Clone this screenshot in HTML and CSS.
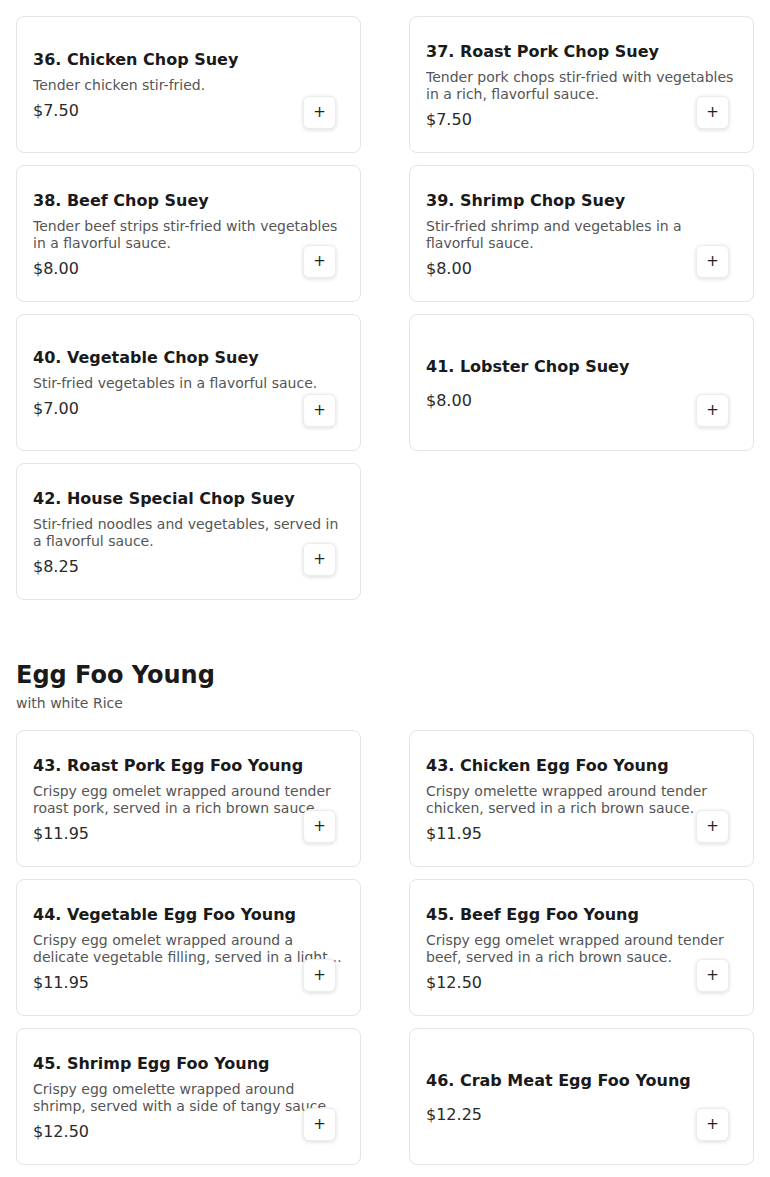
FILE: index.html
```html
<!DOCTYPE html>
<html lang="en">
<head>
<meta charset="utf-8">
<title>Menu</title>
<link rel="stylesheet" href="styles.css">
</head>
<body>
<main class="menu">
  <section class="section section-first">
    <div class="grid">
      <article class="card">
        <div class="info">
          <h3 class="name">36. Chicken Chop Suey</h3>
          <p class="desc">Tender chicken stir-fried.</p>
          <div class="price">$7.50</div>
        </div>
        <button class="add" aria-label="Add">+</button>
      </article>
      <article class="card">
        <div class="info">
          <h3 class="name">37. Roast Pork Chop Suey</h3>
          <p class="desc">Tender pork chops stir-fried with vegetables in a rich, flavorful sauce.</p>
          <div class="price">$7.50</div>
        </div>
        <button class="add" aria-label="Add">+</button>
      </article>
      <article class="card">
        <div class="info">
          <h3 class="name">38. Beef Chop Suey</h3>
          <p class="desc">Tender beef strips stir-fried with vegetables in a flavorful sauce.</p>
          <div class="price">$8.00</div>
        </div>
        <button class="add" aria-label="Add">+</button>
      </article>
      <article class="card">
        <div class="info">
          <h3 class="name">39. Shrimp Chop Suey</h3>
          <p class="desc">Stir-fried shrimp and vegetables in a flavorful sauce.</p>
          <div class="price">$8.00</div>
        </div>
        <button class="add" aria-label="Add">+</button>
      </article>
      <article class="card">
        <div class="info">
          <h3 class="name">40. Vegetable Chop Suey</h3>
          <p class="desc">Stir-fried vegetables in a flavorful sauce.</p>
          <div class="price">$7.00</div>
        </div>
        <button class="add" aria-label="Add">+</button>
      </article>
      <article class="card">
        <div class="info">
          <h3 class="name">41. Lobster Chop Suey</h3>
          <p class="desc"></p>
          <div class="price">$8.00</div>
        </div>
        <button class="add" aria-label="Add">+</button>
      </article>
      <article class="card">
        <div class="info">
          <h3 class="name">42. House Special Chop Suey</h3>
          <p class="desc">Stir-fried noodles and vegetables, served in a flavorful sauce.</p>
          <div class="price">$8.25</div>
        </div>
        <button class="add" aria-label="Add">+</button>
      </article>
    </div>
  </section>

  <section class="section">
    <header class="section-head">
      <h2 class="section-title">Egg Foo Young</h2>
      <p class="section-sub">with white Rice</p>
    </header>
    <div class="grid">
      <article class="card">
        <div class="info">
          <h3 class="name">43. Roast Pork Egg Foo Young</h3>
          <p class="desc">Crispy egg omelet wrapped around tender roast pork, served in a rich brown sauce.</p>
          <div class="price">$11.95</div>
        </div>
        <button class="add" aria-label="Add">+</button>
      </article>
      <article class="card">
        <div class="info">
          <h3 class="name">43. Chicken Egg Foo Young</h3>
          <p class="desc">Crispy omelette wrapped around tender chicken, served in a rich brown sauce.</p>
          <div class="price">$11.95</div>
        </div>
        <button class="add" aria-label="Add">+</button>
      </article>
      <article class="card">
        <div class="info">
          <h3 class="name">44. Vegetable Egg Foo Young</h3>
          <p class="desc">Crispy egg omelet wrapped around a delicate vegetable filling, served in a light sauce.</p>
          <div class="price">$11.95</div>
        </div>
        <button class="add" aria-label="Add">+</button>
      </article>
      <article class="card">
        <div class="info">
          <h3 class="name">45. Beef Egg Foo Young</h3>
          <p class="desc">Crispy egg omelet wrapped around tender beef, served in a rich brown sauce.</p>
          <div class="price">$12.50</div>
        </div>
        <button class="add" aria-label="Add">+</button>
      </article>
      <article class="card">
        <div class="info">
          <h3 class="name">45. Shrimp Egg Foo Young</h3>
          <p class="desc">Crispy egg omelette wrapped around shrimp, served with a side of tangy sauce.</p>
          <div class="price">$12.50</div>
        </div>
        <button class="add" aria-label="Add">+</button>
      </article>
      <article class="card">
        <div class="info">
          <h3 class="name">46. Crab Meat Egg Foo Young</h3>
          <p class="desc"></p>
          <div class="price">$12.25</div>
        </div>
        <button class="add" aria-label="Add">+</button>
      </article>
    </div>
  </section>
</main>
</body>
</html>
```

FILE: styles.css
```css
* {
  box-sizing: border-box;
}

html, body {
  margin: 0;
  padding: 0;
  background: #ffffff;
}

body {
  font-family: "DejaVu Sans", "Liberation Sans", sans-serif;
  color: #1a1a1a;
}

.menu {
  padding: 16px 16px 12px;
}

.section + .section {
  margin-top: 61px;
}

.section-head {
  margin-bottom: 17px;
}

.section-title {
  margin: 0;
  font-size: 24px;
  line-height: 28px;
  font-weight: bold;
  color: #1a1a1a;
}

.section-sub {
  margin: 4px 0 0;
  font-size: 14px;
  line-height: 20px;
  color: #555555;
}

.grid {
  display: grid;
  grid-template-columns: 1fr 1fr;
  column-gap: 48px;
  row-gap: 12px;
}

.card {
  position: relative;
  height: 137px;
  border: 1px solid #e4e4e4;
  border-radius: 8px;
  background: #ffffff;
  padding: 2px 16px 0;
  display: flex;
  flex-direction: column;
  justify-content: center;
}

.info {
  display: flex;
  flex-direction: column;
  gap: 5px;
}

.name {
  margin: 0;
  font-size: 16px;
  line-height: 24px;
  font-weight: bold;
  color: #1a1a1a;
}

.desc {
  margin: 0;
  font-size: 14px;
  line-height: 17px;
  color: #555555;
  display: -webkit-box;
  -webkit-line-clamp: 2;
  -webkit-box-orient: vertical;
  overflow: hidden;
}

.price {
  font-size: 16px;
  line-height: 24px;
  color: #2a2a2a;
}

.add {
  position: absolute;
  right: 24px;
  bottom: 23px;
  width: 33px;
  height: 33px;
  padding: 0;
  border: 1px solid #ececec;
  border-radius: 6px;
  background: #ffffff;
  box-shadow: 0 1px 4px rgba(0, 0, 0, 0.14);
  font-family: "DejaVu Sans", sans-serif;
  font-size: 15px;
  line-height: 1;
  color: #222222;
  display: flex;
  align-items: center;
  justify-content: center;
}
```
